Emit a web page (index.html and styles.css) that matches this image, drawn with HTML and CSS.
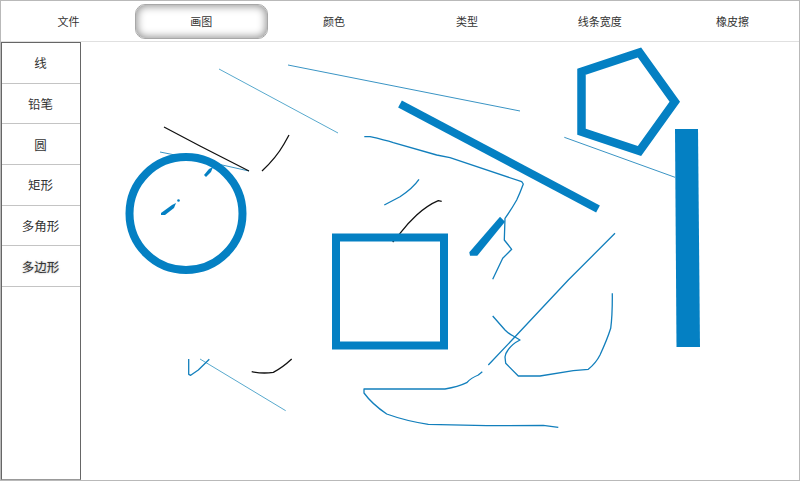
FILE: index.html
```html
<!DOCTYPE html>
<html lang="zh">
<head>
<meta charset="utf-8">
<title>画图</title>
<link rel="stylesheet" href="styles.css">
</head>
<body>
<div class="app">
  <nav class="topbar">
    <a class="tab">文件</a>
    <a class="tab tab-active">画图</a>
    <a class="tab">颜色</a>
    <a class="tab">类型</a>
    <a class="tab">线条宽度</a>
    <a class="tab">橡皮擦</a>
  </nav>
  <main class="workspace">
    <aside class="sidebar">
      <a class="tool">线</a>
      <a class="tool">铅笔</a>
      <a class="tool">圆</a>
      <a class="tool">矩形</a>
      <a class="tool">多角形</a>
      <a class="tool tool-hover">多边形</a>
    </aside>
    <svg class="canvas" viewBox="81 42 718 438" preserveAspectRatio="none" xmlns="http://www.w3.org/2000/svg">
      <path class="thin pale" d="M219,69 L338,133"/>
      <path class="thin mid" d="M288,65 L520,111"/>
      <path class="thin mid" d="M160,152 L200,160 L249,171"/>
      <path class="thin mid" d="M564.3,137.3 L675,177.3"/>
      <path class="thin pale" d="M200,359 L285.7,410.7"/>
      <path class="ink" d="M164,127 L200,146 L249,171"/>
      <path class="ink" d="M262,171 Q276,158 284,144 L289,135"/>
      <path class="ink" d="M392.7,242 L400,233.3 Q408,223 416.7,215 Q428,205 438.3,200.7 L441.7,201.3"/>
      <path class="ink" d="M251.7,371.7 Q263,374 273.3,372.3 Q282,368 291.7,359"/>
      <circle class="thick" cx="186" cy="213.5" r="56.5"/>
      <polygon class="fill" points="204,175 209,169 213,167 211,172 206,177"/>
      <polygon class="fill" points="161,213 172,205 176,203 174,208 165,215 161,215"/>
      <circle class="fill" cx="178.5" cy="200.5" r="1.3"/>
      <path class="thick" d="M400,104 L598,209"/>
      <rect class="thick" x="336" y="237.5" width="108" height="108"/>
      <polygon class="fill" points="469.3,252.3 500,216.7 505,221.7 477.3,255.7 470,255.7"/>
      <polygon class="thick penta" points="581.5,71.7 639.5,52.5 674.8,101.7 639.5,151 581.5,131.7"/>
      <polygon class="fill" points="675,129 698,129 700,347 676.5,347"/>
      <path class="pen" d="M364.3,136.7 L370,136.7 Q385,140 393.3,142.7 L436.7,155 L450,157.7 L521.7,181.7 L523.3,184 Q520,193 516.7,200 Q511,210 505,218.3 L504.3,240 L511.7,249.3 L502.7,258.3 L492.7,279.3"/>
      <path class="pen" d="M384.3,205 L400,196.7 Q413,188 419,179.3"/>
      <path class="pen" d="M615,233.3 L568.3,280 L516.7,335 L488.3,365"/>
      <path class="pen" d="M482.3,371.7 L478.3,375 Q471,378 466.7,382.7 Q458,387 445,389 L364,389 L364,393 Q372,404 386.7,414 Q406,421 428.3,424.3 L486.7,425.7 L543.3,425.3 L558.3,427.3"/>
      <path class="pen" d="M492.7,316 L505,330 Q509,334 513.3,336 L520,340 Q512,344 508,350 Q505,354 505,357 L505.7,363.3 L518.3,376 L540,376 L573.3,370.7 L588.3,369.3 Q596,363 600,355 Q607,340 610.7,328.3 Q612.5,315 612.3,293.3"/>
      <path class="pen" d="M188.7,359 L188.7,374.3 L190.7,375.3 L198.3,370 L209.3,359.3"/>
    </svg>
  </main>
</div>
</body>
</html>
```
FILE: styles.css
```css
* { box-sizing: border-box; }

html, body {
  margin: 0;
  padding: 0;
  background: #fff;
}

body {
  font-family: "Noto Sans CJK SC", "Liberation Sans", sans-serif;
  color: #333;
  overflow: hidden;
}

.app {
  width: 800px;
  height: 481px;
  border: 1px solid #b9b9b9;
  display: flex;
  flex-direction: column;
}

.topbar {
  flex: none;
  height: 41px;
  padding: 3px 0 2px 1px;
  display: grid;
  grid-template-columns: repeat(6, 1fr);
  border-bottom: 1px solid #e0e0e0;
}

.tab {
  display: flex;
  align-items: center;
  justify-content: center;
  padding-bottom: 2px;
  font-size: 11px;
  border-radius: 10px;
}

.tab-active {
  border: 1px solid #a8a8a8;
  box-shadow: inset 0 0 8px 1px #8c8c8c;
}

.workspace {
  flex: 1;
  min-height: 0;
  display: flex;
}

.sidebar {
  flex: none;
  width: 80px;
  border: 1px solid #666;
  border-bottom-color: #999;
  display: flex;
  flex-direction: column;
}

.tool {
  flex: none;
  height: 40.7px;
  padding-right: 1px;
  display: flex;
  align-items: center;
  justify-content: center;
  font-size: 12.5px;
  border-bottom: 1px solid #c4c4c4;
}

.tool-hover {
  text-shadow: 0 0 2px #999;
}

.canvas {
  flex: 1;
  min-width: 0;
  height: 100%;
  display: block;
}

.canvas path, .canvas circle, .canvas rect, .canvas polygon {
  fill: none;
  stroke-linejoin: round;
}

.canvas .thin { stroke-width: 1; }
.canvas .pale { stroke: #58a9cd; }
.canvas .mid { stroke: #3a94c4; }
.canvas .ink { stroke: #111; stroke-width: 1.3; }
.canvas .pen { stroke: #127fbc; stroke-width: 1.3; }
.canvas .thick { stroke: #0480c3; stroke-width: 8; stroke-linejoin: miter; }
.canvas .penta { stroke-width: 8.5; }
.canvas .fill { fill: #0480c3; }
```
